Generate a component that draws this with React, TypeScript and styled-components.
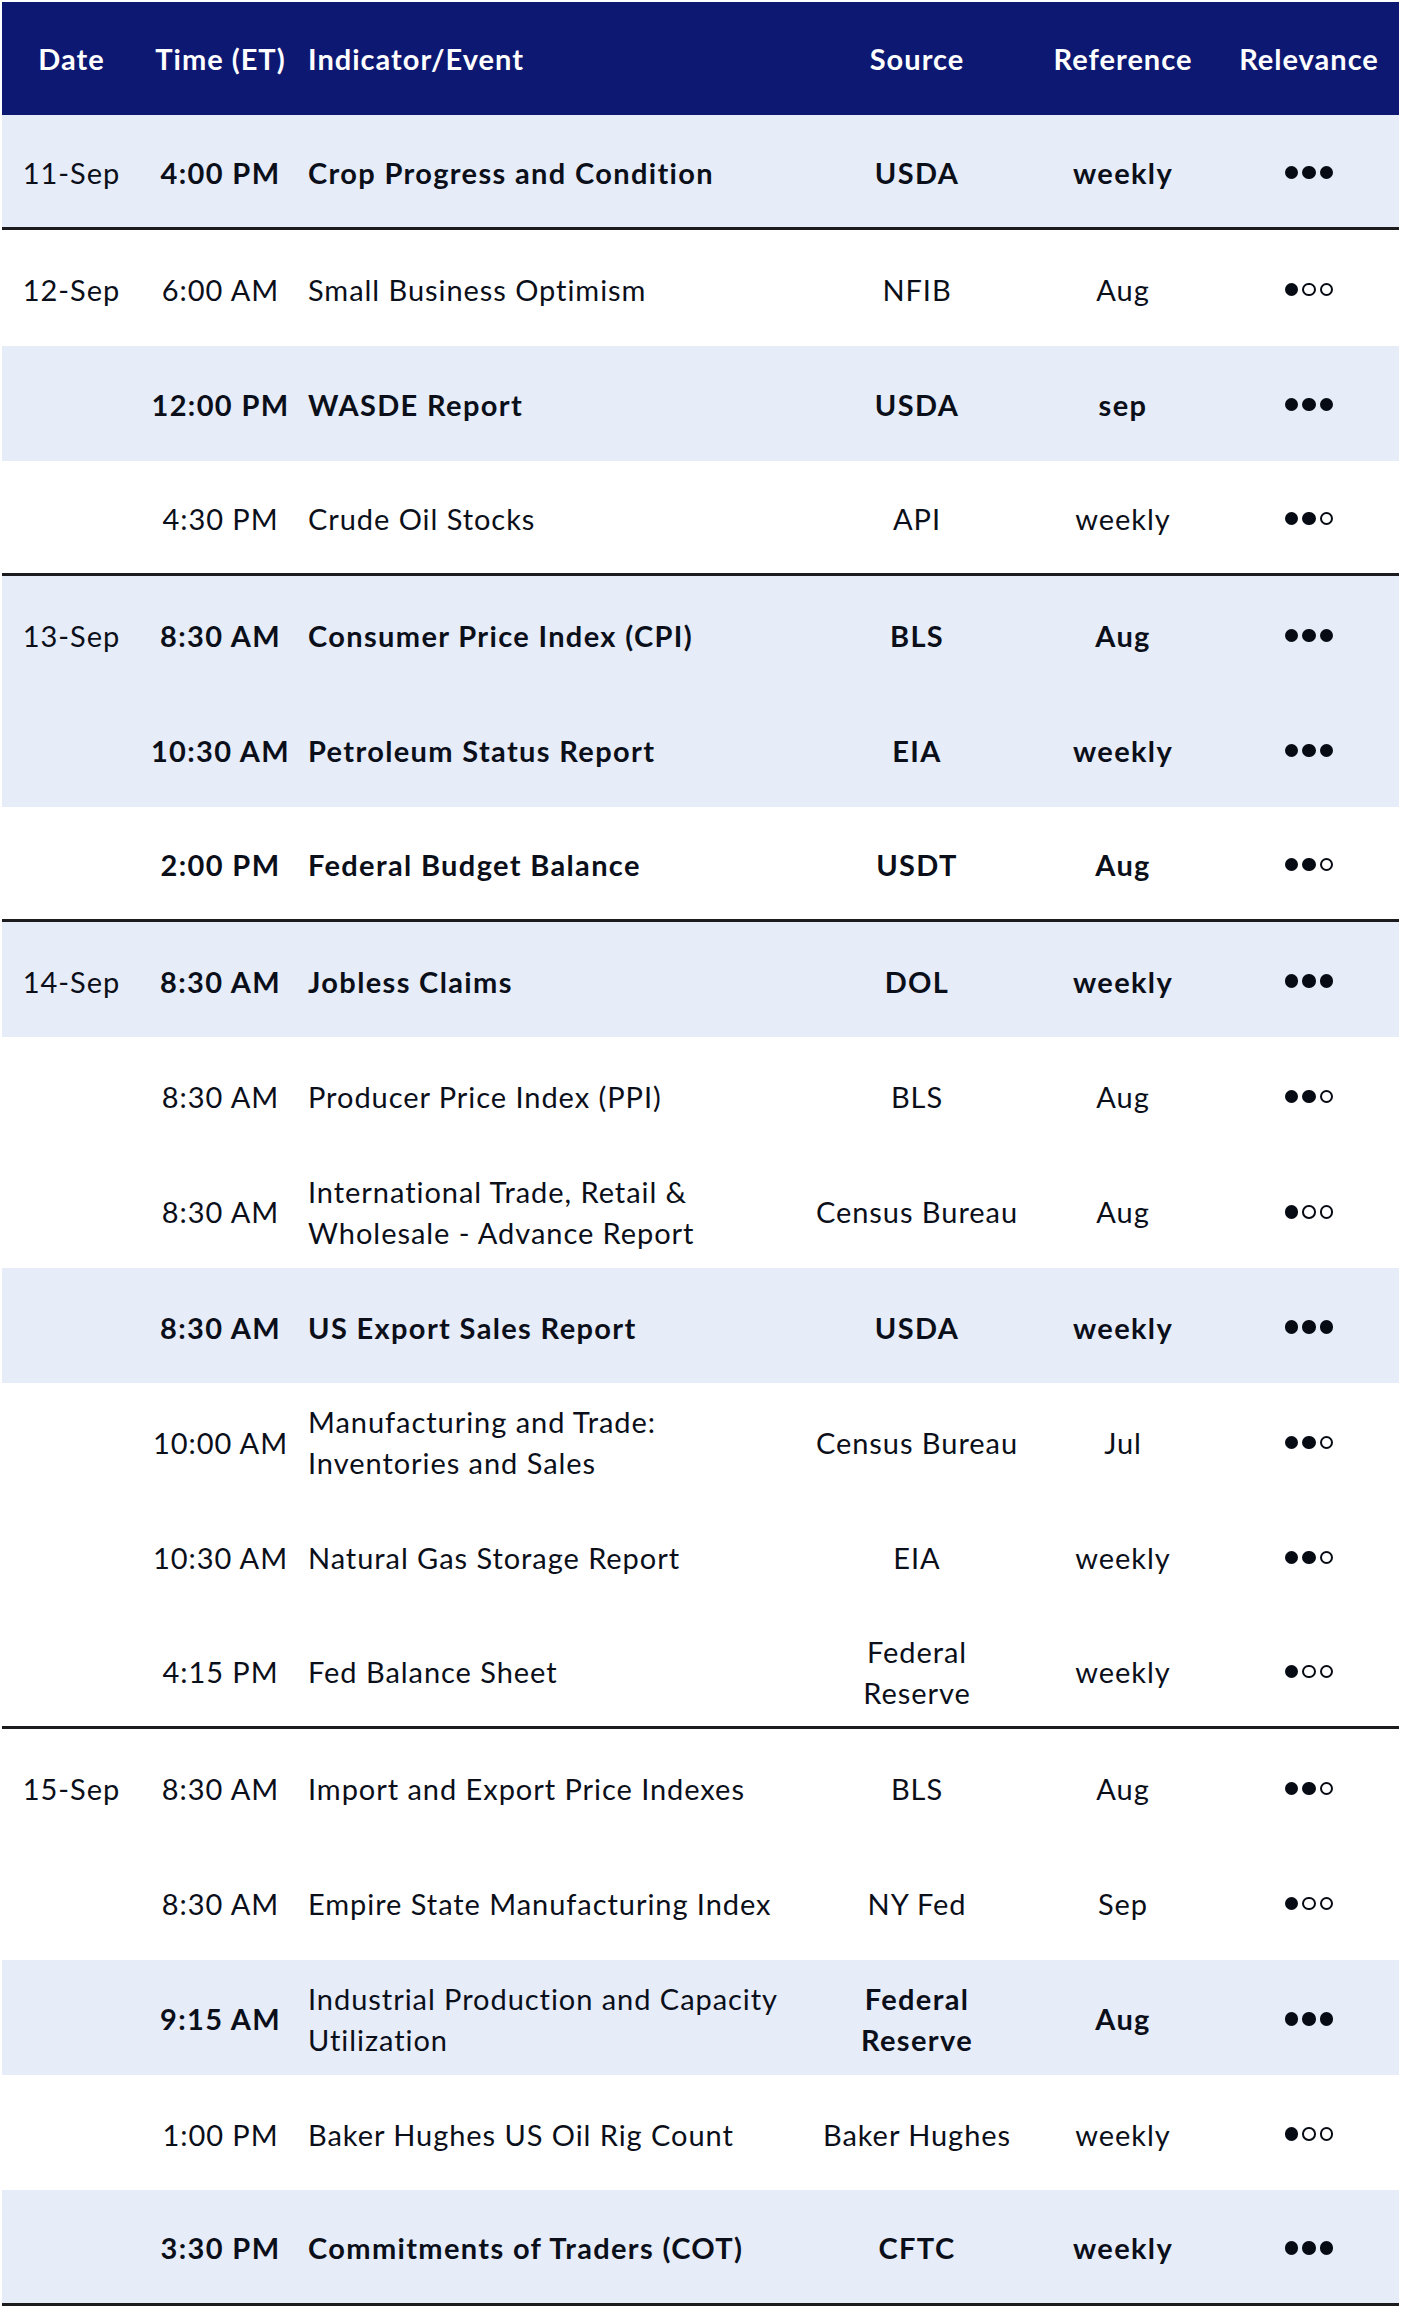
import React from "react";
import styled, { createGlobalStyle } from "styled-components";

const GlobalStyle = createGlobalStyle`
  html, body {
    margin: 0;
    padding: 0;
    background: #ffffff;
  }
  body {
    font-family: "Lato", "Open Sans", sans-serif;
    color: #0b0f1a;
  }
`;

const COLS = "139px 159px 507px 220px 192px 180px";

const Table = styled.div`
  display: flex;
  flex-direction: column;
  margin: 2px 3px 0 2px;
  width: 1397px;
`;

const HeaderRow = styled.div`
  display: grid;
  grid-template-columns: ${COLS};
  align-items: center;
  height: 113px;
  background: #0d1873;
  color: #ffffff;
  font-size: 29px;
  font-weight: 700;
  letter-spacing: 1px;
`;

const Row = styled.div<{ $shaded: boolean; $groupEnd: boolean }>`
  display: grid;
  grid-template-columns: ${COLS};
  align-items: center;
  box-sizing: border-box;
  height: 115.3px;
  padding-top: 3px;
  background: ${(p) => (p.$shaded ? "#e6ecf8" : "#ffffff")};
  border-bottom: ${(p) => (p.$groupEnd ? "3px solid #1c1c1f" : "none")};
  font-size: 29px;
  line-height: 41px;
`;

const Cell = styled.div<{ $align?: "left" | "center"; $bold?: boolean }>`
  text-align: ${(p) => p.$align ?? "center"};
  font-weight: ${(p) => (p.$bold ? 700 : 400)};
  letter-spacing: ${(p) => (p.$bold ? "1.35px" : "0.95px")};
  padding: ${(p) => (p.$align === "left" ? "0 4px 0 8px" : "0 2px")};
  white-space: nowrap;
`;

const HeadCell = styled.div<{ $align?: "left" | "center" }>`
  text-align: ${(p) => p.$align ?? "center"};
  padding: ${(p) => (p.$align === "left" ? "0 4px 0 8px" : "0 2px")};
  white-space: nowrap;
`;

const Dots = styled.div`
  display: flex;
  justify-content: center;
  align-items: center;
  gap: 4px;
`;

const Dot = styled.span<{ $filled: boolean }>`
  display: block;
  box-sizing: border-box;
  width: 13.5px;
  height: 13.5px;
  border-radius: 50%;
  border: 2px solid #070b14;
  background: ${(p) => (p.$filled ? "#070b14" : "transparent")};
`;

type Item = {
  date?: string;
  time: string;
  event: string[];
  source: string[];
  ref: string;
  level: number;
  shaded: boolean;
  groupEnd?: boolean;
  bold: { time: boolean; event: boolean; source: boolean; ref: boolean };
};

const B = { time: true, event: true, source: true, ref: true };
const R = { time: false, event: false, source: false, ref: false };

const rows: Item[] = [
  { date: "11-Sep", time: "4:00 PM", event: ["Crop Progress and Condition"], source: ["USDA"], ref: "weekly", level: 3, shaded: true, groupEnd: true, bold: B },
  { date: "12-Sep", time: "6:00 AM", event: ["Small Business Optimism"], source: ["NFIB"], ref: "Aug", level: 1, shaded: false, bold: R },
  { time: "12:00 PM", event: ["WASDE Report"], source: ["USDA"], ref: "sep", level: 3, shaded: true, bold: B },
  { time: "4:30 PM", event: ["Crude Oil Stocks"], source: ["API"], ref: "weekly", level: 2, shaded: false, groupEnd: true, bold: R },
  { date: "13-Sep", time: "8:30 AM", event: ["Consumer Price Index (CPI)"], source: ["BLS"], ref: "Aug", level: 3, shaded: true, bold: B },
  { time: "10:30 AM", event: ["Petroleum Status Report"], source: ["EIA"], ref: "weekly", level: 3, shaded: true, bold: B },
  { time: "2:00 PM", event: ["Federal Budget Balance"], source: ["USDT"], ref: "Aug", level: 2, shaded: false, groupEnd: true, bold: B },
  { date: "14-Sep", time: "8:30 AM", event: ["Jobless Claims"], source: ["DOL"], ref: "weekly", level: 3, shaded: true, bold: B },
  { time: "8:30 AM", event: ["Producer Price Index (PPI)"], source: ["BLS"], ref: "Aug", level: 2, shaded: false, bold: R },
  { time: "8:30 AM", event: ["International Trade, Retail &", "Wholesale - Advance Report"], source: ["Census Bureau"], ref: "Aug", level: 1, shaded: false, bold: R },
  { time: "8:30 AM", event: ["US Export Sales Report"], source: ["USDA"], ref: "weekly", level: 3, shaded: true, bold: B },
  { time: "10:00 AM", event: ["Manufacturing and Trade:", "Inventories and Sales"], source: ["Census Bureau"], ref: "Jul", level: 2, shaded: false, bold: R },
  { time: "10:30 AM", event: ["Natural Gas Storage Report"], source: ["EIA"], ref: "weekly", level: 2, shaded: false, bold: R },
  { time: "4:15 PM", event: ["Fed Balance Sheet"], source: ["Federal", "Reserve"], ref: "weekly", level: 1, shaded: false, groupEnd: true, bold: R },
  { date: "15-Sep", time: "8:30 AM", event: ["Import and Export Price Indexes"], source: ["BLS"], ref: "Aug", level: 2, shaded: false, bold: R },
  { time: "8:30 AM", event: ["Empire State Manufacturing Index"], source: ["NY Fed"], ref: "Sep", level: 1, shaded: false, bold: R },
  { time: "9:15 AM", event: ["Industrial Production and Capacity", "Utilization"], source: ["Federal", "Reserve"], ref: "Aug", level: 3, shaded: true, bold: { time: true, event: false, source: true, ref: true } },
  { time: "1:00 PM", event: ["Baker Hughes US Oil Rig Count"], source: ["Baker Hughes"], ref: "weekly", level: 1, shaded: false, bold: R },
  { time: "3:30 PM", event: ["Commitments of Traders (COT)"], source: ["CFTC"], ref: "weekly", level: 3, shaded: true, groupEnd: true, bold: B },
];

const Lines = ({ lines }: { lines: string[] }) => (
  <>
    {lines.map((l, i) => (
      <React.Fragment key={i}>
        {i > 0 && <br />}
        {l}
      </React.Fragment>
    ))}
  </>
);

const Relevance = ({ level }: { level: number }) => (
  <Dots>
    {[0, 1, 2].map((i) => (
      <Dot key={i} $filled={i < level} />
    ))}
  </Dots>
);

export default function App() {
  return (
    <>
      <GlobalStyle />
      <Table>
        <HeaderRow>
          <HeadCell>Date</HeadCell>
          <HeadCell>Time (ET)</HeadCell>
          <HeadCell $align="left">Indicator/Event</HeadCell>
          <HeadCell>Source</HeadCell>
          <HeadCell>Reference</HeadCell>
          <HeadCell>Relevance</HeadCell>
        </HeaderRow>
        {rows.map((r, i) => (
          <Row key={i} $shaded={r.shaded} $groupEnd={!!r.groupEnd}>
            <Cell>{r.date ?? ""}</Cell>
            <Cell $bold={r.bold.time}>{r.time}</Cell>
            <Cell $align="left" $bold={r.bold.event}>
              <Lines lines={r.event} />
            </Cell>
            <Cell $bold={r.bold.source}>
              <Lines lines={r.source} />
            </Cell>
            <Cell $bold={r.bold.ref}>{r.ref}</Cell>
            <Relevance level={r.level} />
          </Row>
        ))}
      </Table>
    </>
  );
}
